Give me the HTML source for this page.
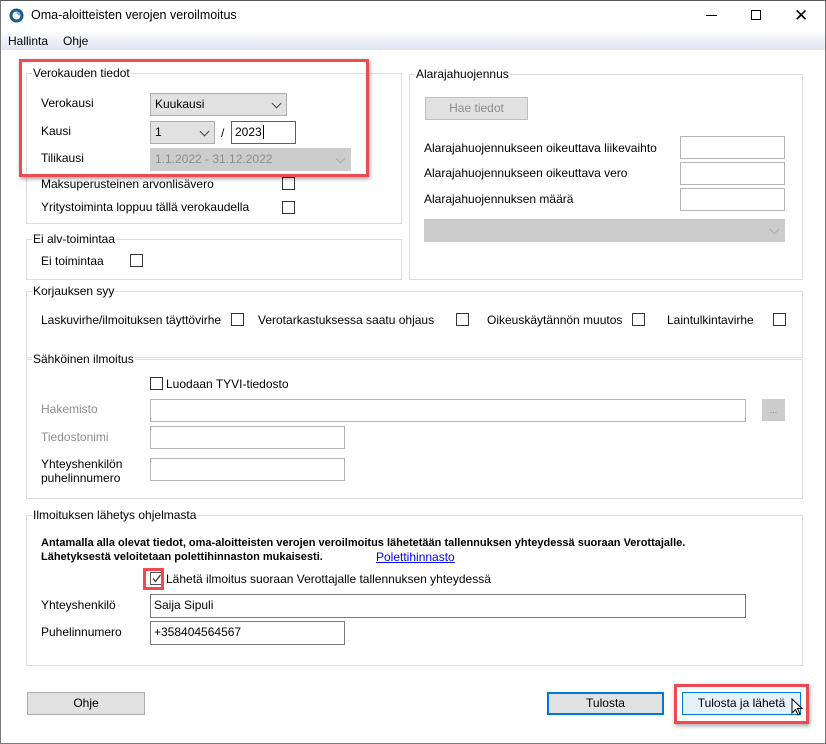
<!DOCTYPE html>
<html><head><meta charset="utf-8"><style>
*{box-sizing:border-box;margin:0;padding:0}
body{width:826px;height:744px;position:relative;background:#fff;font-family:"Liberation Sans",sans-serif;font-size:12px;color:#000;overflow:hidden}
.a{position:absolute;white-space:nowrap}
.gb{position:absolute;border:1px solid #dcdcdc}
.gt{position:absolute;background:#fff;padding:0 1px;line-height:14px;top:-8px;left:5px}
.cb{position:absolute;width:13px;height:13px;border:1px solid #333;background:#fff}
.in{position:absolute;border:1px solid #7a7a7a;background:#fff;padding:3px 3px;line-height:14px}
.cm{position:absolute;border:1px solid #adadad;background:#e1e1e1;padding:3px 4px;line-height:14px}
.dis{background:#ccc;border-color:#ccc;color:#8d8d8d}
.btn{position:absolute;border:1px solid #adadad;background:#e1e1e1;text-align:center;line-height:20px}
.chev{position:absolute;right:6px;top:6px;width:7px;height:7px;border-right:1px solid #444;border-bottom:1px solid #444;transform:rotate(45deg)}
.red{position:absolute;border:3px solid #ee4a4f;box-shadow:1px 2px 4px rgba(0,0,0,.35)}
</style></head><body>
<div class="a" style="left:0;top:0;width:826px;height:744px;border:1px solid #7a7a7a;border-top-color:#555"></div>
<!-- title -->
<svg class="a" style="left:9px;top:8px" width="15" height="15" viewBox="0 0 15 15"><circle cx="7.5" cy="7.5" r="7" fill="#1c5a8a"/><circle cx="7.5" cy="7.5" r="4" fill="#fff"/><path d="M7.5 3.5 A4 4 0 0 1 11.5 7.5 L9 7.5 A1.5 1.5 0 0 0 7.5 6z" fill="#7fb3d9"/></svg>
<div class="a" style="left:31px;top:8px;font-size:12.5px">Oma-aloitteisten verojen veroilmoitus</div>
<div class="a" style="left:706px;top:15px;width:11px;height:1px;background:#000"></div>
<div class="a" style="left:751px;top:10px;width:10px;height:10px;border:1px solid #000"></div>
<div class="a" style="left:794px;top:8px;font-size:17px;line-height:15px">✕</div>
<div class="a" style="left:1px;top:31px;width:824px;height:19px;background:linear-gradient(#fff,#dfe3f1)"></div>
<div class="a" style="left:8px;top:34px">Hallinta</div>
<div class="a" style="left:63px;top:34px">Ohje</div>

<!-- Verokauden tiedot -->
<div class="gb" style="left:26px;top:73px;width:376px;height:151px"><div class="gt">Verokauden tiedot</div></div>
<div class="a" style="left:41px;top:96px">Verokausi</div>
<div class="cm" style="left:150px;top:93px;width:137px;height:23px">Kuukausi<div class="chev"></div></div>
<div class="a" style="left:41px;top:124px">Kausi</div>
<div class="cm" style="left:150px;top:121px;width:65px;height:23px">1<div class="chev"></div></div>
<div class="a" style="left:221px;top:126px">/</div>
<div class="in" style="left:231px;top:121px;width:65px;height:23px;border-color:#0078d7">2023<span style="border-left:1px solid #000;margin-left:1px"></span></div>
<div class="a" style="left:41px;top:151px">Tilikausi</div>
<div class="cm dis" style="left:150px;top:148px;width:201px;height:23px">1.1.2022 - 31.12.2022<div class="chev" style="border-color:#aaa"></div></div>
<div class="a" style="left:41px;top:177px">Maksuperusteinen arvonlisävero</div>
<div class="cb" style="left:282px;top:177px"></div>
<div class="a" style="left:41px;top:200px">Yritystoiminta loppuu tällä verokaudella</div>
<div class="cb" style="left:282px;top:201px"></div>
<div class="red" style="left:19px;top:59px;width:350px;height:118px"></div>

<!-- Alarajahuojennus -->
<div class="gb" style="left:409px;top:74px;width:394px;height:206px"><div class="gt">Alarajahuojennus</div></div>
<div class="btn dis" style="left:425px;top:97px;width:103px;height:23px;border-color:#bfbfbf">Hae tiedot</div>
<div class="a" style="left:424px;top:141px">Alarajahuojennukseen oikeuttava liikevaihto</div>
<div class="in" style="left:680px;top:136px;width:105px;height:23px;border-color:#b5b5b5"></div>
<div class="a" style="left:424px;top:166px">Alarajahuojennukseen oikeuttava vero</div>
<div class="in" style="left:680px;top:162px;width:105px;height:23px;border-color:#b5b5b5"></div>
<div class="a" style="left:424px;top:192px">Alarajahuojennuksen määrä</div>
<div class="in" style="left:680px;top:188px;width:105px;height:23px;border-color:#b5b5b5"></div>
<div class="cm dis" style="left:424px;top:219px;width:361px;height:23px"><div class="chev" style="border-color:#aaa"></div></div>

<!-- Ei alv -->
<div class="gb" style="left:26px;top:239px;width:376px;height:41px"><div class="gt">Ei alv-toimintaa</div></div>
<div class="a" style="left:41px;top:254px">Ei toimintaa</div>
<div class="cb" style="left:130px;top:254px"></div>

<!-- Korjauksen syy -->
<div class="gb" style="left:26px;top:291px;width:777px;height:67px"><div class="gt">Korjauksen syy</div></div>
<div class="a" style="left:41px;top:313px">Laskuvirhe/ilmoituksen täyttövirhe</div>
<div class="cb" style="left:231px;top:313px"></div>
<div class="a" style="left:258px;top:313px">Verotarkastuksessa saatu ohjaus</div>
<div class="cb" style="left:456px;top:313px"></div>
<div class="a" style="left:487px;top:313px">Oikeuskäytännön muutos</div>
<div class="cb" style="left:632px;top:313px"></div>
<div class="a" style="left:667px;top:313px">Laintulkintavirhe</div>
<div class="cb" style="left:773px;top:313px"></div>

<!-- Sähköinen -->
<div class="gb" style="left:26px;top:359px;width:777px;height:140px"><div class="gt">Sähköinen ilmoitus</div></div>
<div class="cb" style="left:150px;top:377px"></div>
<div class="a" style="left:166px;top:377px">Luodaan TYVI-tiedosto</div>
<div class="a" style="left:41px;top:402px;color:#8d8d8d">Hakemisto</div>
<div class="in" style="left:150px;top:399px;width:596px;height:23px;border-color:#b5b5b5"></div>
<div class="btn" style="left:762px;top:399px;width:23px;height:22px;background:#ccc;border-color:#ccc;color:#888;font-size:9px">...</div>
<div class="a" style="left:41px;top:430px;color:#8d8d8d">Tiedostonimi</div>
<div class="in" style="left:150px;top:426px;width:195px;height:23px;border-color:#b5b5b5"></div>
<div class="a" style="left:41px;top:457px">Yhteyshenkilön</div>
<div class="a" style="left:41px;top:471px">puhelinnumero</div>
<div class="in" style="left:150px;top:458px;width:195px;height:23px;border-color:#b5b5b5"></div>

<!-- Ilmoituksen lähetys -->
<div class="gb" style="left:26px;top:515px;width:777px;height:151px"><div class="gt">Ilmoituksen lähetys ohjelmasta</div></div>
<div class="a" style="left:41px;top:537px;font-weight:bold;font-size:11px">Antamalla alla olevat tiedot, oma-aloitteisten verojen veroilmoitus lähetetään tallennuksen yhteydessä suoraan Verottajalle.</div>
<div class="a" style="left:41px;top:551px;font-weight:bold;font-size:11px">Lähetyksestä veloitetaan polettihinnaston mukaisesti.</div>
<div class="a" style="left:376px;top:550px;color:#0000ee;text-decoration:underline">Polettihinnasto</div>
<div class="cb" style="left:150px;top:572px;border-color:#555"></div>
<svg class="a" style="left:151px;top:573px" width="11" height="11"><path d="M2 5.5 L4.5 8.5 L9.5 2" stroke="#333" stroke-width="1.3" fill="none"/></svg>
<div class="red" style="left:143px;top:568px;width:21px;height:22px;box-shadow:none"></div>
<div class="a" style="left:166px;top:572px">Lähetä ilmoitus suoraan Verottajalle tallennuksen yhteydessä</div>
<div class="a" style="left:41px;top:598px">Yhteyshenkilö</div>
<div class="in" style="left:150px;top:594px;width:596px;height:24px">Saija Sipuli</div>
<div class="a" style="left:41px;top:625px">Puhelinnumero</div>
<div class="in" style="left:150px;top:621px;width:195px;height:24px">+358404564567</div>

<!-- buttons -->
<div class="btn" style="left:27px;top:692px;width:118px;height:23px">Ohje</div>
<div class="btn" style="left:547px;top:692px;width:117px;height:23px;border:2px solid #0078d7;line-height:19px">Tulosta</div>
<div class="btn" style="left:682px;top:692px;width:119px;height:23px;background:#e5f1fb;border-color:#0078d7">Tulosta ja lähetä</div>
<div class="red" style="left:674px;top:684px;width:135px;height:40px"></div>
<svg class="a" style="left:791px;top:698px" width="12" height="20"><path d="M1 1 L1 15 L4.5 11.5 L7 17 L9 16 L6.5 10.5 L11 10.5 Z" fill="#fff" stroke="#000" stroke-width="1"/></svg>
</body></html>
